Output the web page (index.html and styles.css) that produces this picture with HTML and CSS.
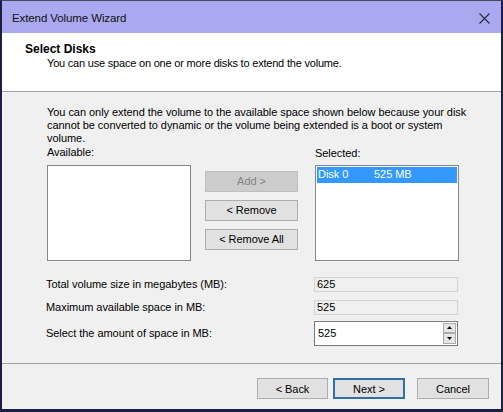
FILE: index.html
```html
<!DOCTYPE html>
<html>
<head>
<meta charset="utf-8">
<link rel="stylesheet" href="styles.css">
</head>
<body>
<div class="window">
  <div class="titlebar">
    <span class="title">Extend Volume Wizard</span>
    <svg class="close" width="11" height="11" viewBox="0 0 11 11"><path d="M0.5 0.5 L10.5 10.5 M10.5 0.5 L0.5 10.5" stroke="#2a2a3a" stroke-width="1.1" fill="none"/></svg>
  </div>
  <div class="header">
    <div class="h-title">Select Disks</div>
    <div class="h-sub">You can use space on one or more disks to extend the volume.</div>
  </div>
  <div class="content">
    <p class="note">You can only extend the volume to the available space shown below because your disk cannot be converted to dynamic or the volume being extended is a boot or system volume.</p>
    <div class="lists">
      <div class="col">
        <div class="label">Available:</div>
        <div class="listbox"></div>
      </div>
      <div class="mid">
        <div class="btn disabled">Add &gt;</div>
        <div class="btn">&lt; Remove</div>
        <div class="btn">&lt; Remove All</div>
      </div>
      <div class="col right">
        <div class="label">Selected:</div>
        <div class="listbox">
          <div class="row-sel"><span class="disk">Disk 0</span><span>525 MB</span></div>
        </div>
      </div>
    </div>
    <div class="fields">
      <div class="f-label r1">Total volume size in megabytes (MB):</div>
      <div class="ro r1">625</div>
      <div class="f-label r2">Maximum available space in MB:</div>
      <div class="ro r2">525</div>
      <div class="f-label r3">Select the amount of space in MB:</div>
      <div class="spin r3">
        <span class="spin-val">525</span>
        <span class="spin-btns">
          <span class="sb"><svg width="5" height="3" viewBox="0 0 5 3"><path d="M0 3 L2.5 0 L5 3 Z" fill="#000"/></svg></span>
          <span class="sb"><svg width="5" height="3" viewBox="0 0 5 3"><path d="M0 0 L5 0 L2.5 3 Z" fill="#000"/></svg></span>
        </span>
      </div>
    </div>
  </div>
  <div class="footer">
    <div class="btn fb back">&lt; Back</div>
    <div class="btn fb next">Next &gt;</div>
    <div class="btn fb cancel">Cancel</div>
  </div>
</div>
</body>
</html>
```
FILE: styles.css
```css
* { box-sizing: border-box; }
html, body { margin: 0; padding: 0; background: #f0f0f0; }
body {
  font-family: "Liberation Sans", Arial, sans-serif;
  font-size: 11px;
  letter-spacing: -0.05px;
  color: #000;
}
.window {
  width: 503px;
  height: 412px;
  display: flex;
  flex-direction: column;
  border-top: 1px solid #4a4a5c;
  border-left: 2px solid #1e1e44;
  border-right: 2px solid #1e1e44;
  border-bottom: 3px solid #1e1e44;
  background: #f0f0f0;
}
.titlebar {
  height: 32px;
  flex: none;
  background: #aaa9ef;
  display: flex;
  align-items: center;
  justify-content: space-between;
  padding: 0 11px 0 10px;
}
.title {
  font-size: 11.5px;
  letter-spacing: -0.1px;
  color: #111;
  padding-top: 2px;
}
.close { margin-top: 2px; }
.header {
  height: 59px;
  flex: none;
  background: #fff;
  border-bottom: 1px solid #a0a0a0;
  padding: 9px 0 0 23px;
}
.h-title {
  font-weight: bold;
  font-size: 12px;
  letter-spacing: 0;
  line-height: 15px;
}
.h-sub {
  line-height: 13px;
  padding-left: 22px;
  letter-spacing: -0.2px;
}
.content {
  flex: 1;
  padding: 14px 0 0 44px;
  border-left: 1px solid #f8f8fb;
}
.note {
  margin: 0;
  width: 424px;
  line-height: 13.2px;
}
.lists {
  display: flex;
  gap: 14px;
  margin-top: 0;
}
.col { width: 144px; display: flex; flex-direction: column; }
.col.right { margin-left: 3px; }
.label { line-height: 13px; height: 13px; margin-bottom: 6px; }
.right .label { margin-top: 1px; margin-bottom: 5px; }
.listbox {
  height: 96px;
  background: #fff;
  border: 1px solid #828790;
  padding: 1px;
}
.row-sel {
  height: 16px;
  background: #3399ff;
  color: #fff;
  line-height: 15px;
  padding-left: 1px;
  display: flex;
}
.disk { width: 56px; }
.mid {
  width: 93px;
  padding-top: 25px;
  display: flex;
  flex-direction: column;
  gap: 8px;
}
.btn {
  height: 21px;
  background: #e1e1e1;
  border: 1px solid #adadad;
  display: flex;
  align-items: center;
  justify-content: center;
  color: #000;
}
.btn.disabled {
  background: #cccccc;
  border-color: #bfbfbf;
  color: #838383;
}
.fields {
  display: grid;
  grid-template-columns: 268px 144px;
  grid-template-rows: 15px 15px 23px;
  row-gap: 8px;
  margin-top: 16px;
  margin-left: -1px;
}
.fields .r3 { margin-top: -2px; }
.f-label { display: flex; align-items: center; }
.ro {
  background: #f0f0f0;
  border: 1px solid #d4d4d4;
  padding-left: 2px;
  display: flex;
  align-items: center;
}
.spin {
  background: #fff;
  border: 1px solid #7a7a7a;
  display: flex;
  align-items: stretch;
  padding: 1px;
}
.spin-val { flex: 1; padding-left: 2px; display: flex; align-items: center; }
.spin-btns { width: 13px; display: flex; flex-direction: column; }
.sb {
  flex: 1;
  background: #e6e6e6;
  border: 1px solid #acacac;
  display: flex;
  align-items: center;
  justify-content: center;
}
.footer {
  height: 46px;
  flex: none;
  border-top: 1px solid #a0a0a0;
  display: flex;
  justify-content: flex-end;
  padding: 14px 12px 0 0;
  gap: 5px;
}
.fb { width: 71px; }
.next { width: 72px; border: 2px solid #2f6fa8; }
.cancel { width: 72px; margin-left: 7px; }
```
